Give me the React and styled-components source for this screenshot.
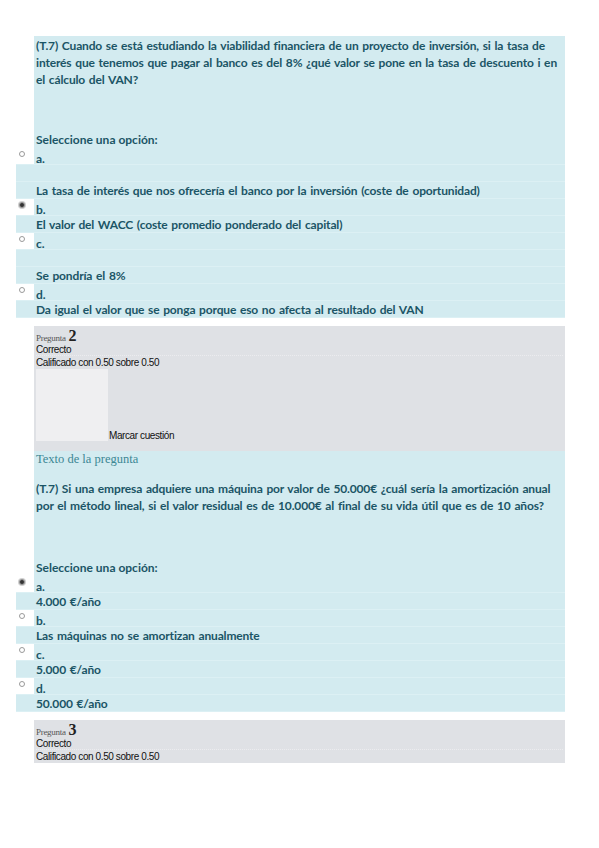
import React from "react";
import styled, { createGlobalStyle } from "styled-components";

const GlobalStyle = createGlobalStyle`
  * { box-sizing: border-box; }
  body { margin: 0; background: #ffffff; }
`;

const BLUE = "#d3ebf0";
const GRAY = "#dfe1e5";
const TEAL = "#1b5566";

const Page = styled.div`
  width: 599px;
  padding: 36px 34px 40px 16px;
  display: flex;
  flex-direction: column;
  gap: 8px;
  font-family: Lato, "Open Sans", sans-serif;
`;

const Block = styled.section`
  display: flex;
  flex-direction: column;
`;

const Info = styled.div`
  margin-left: 18px;
  background: ${GRAY};
  padding: 3px 2px ${(p) => (p.$flag ? "10px" : "0")};
  display: flex;
  flex-direction: column;
  font-family: "Liberation Sans", Arial, sans-serif;
  color: #111;
`;

const QNo = styled.div`
  height: 14px;
  line-height: 14px;
  font-family: "Liberation Serif", "Times New Roman", serif;
  font-size: 9px;
  color: #555;
  letter-spacing: -0.3px;
  b {
    font-size: 16px;
    color: #222;
    margin-left: 1px;
    letter-spacing: 0;
  }
`;

const InfoLine = styled.div`
  height: 13px;
  line-height: 13px;
  font-size: 10px;
  letter-spacing: -0.4px;
  border-bottom: ${(p) => (p.$dotted ? "1px dotted #ececef" : "none")};
`;

const FlagRow = styled.div`
  display: flex;
  align-items: flex-end;
`;

const FlagBox = styled.div`
  width: 72px;
  height: 72px;
  background: #efeff1;
`;

const FlagText = styled.span`
  font-size: 10px;
  line-height: 10px;
  letter-spacing: -0.4px;
  margin-left: 1px;
`;

const Formulation = styled.div`
  margin-left: 18px;
  background: ${BLUE};
  padding: ${(p) => (p.$top ? "1px" : "0")} 2px 0;
  color: ${TEAL};
  display: flex;
  flex-direction: column;
`;

const SmallTitle = styled.div`
  font-family: "Liberation Serif", "Times New Roman", serif;
  font-size: 12.5px;
  line-height: 17px;
  color: #3c8794;
  margin-bottom: 12px;
`;

const QText = styled.p`
  margin: 0 0 ${(p) => p.$gap || 43}px;
  font-size: 12px;
  line-height: 17px;
  font-weight: 700;
  letter-spacing: -0.15px;
  word-spacing: 1px;
`;

const Prompt = styled.div`
  font-size: 12px;
  line-height: 17px;
  font-weight: 700;
`;

const Options = styled.div`
  background: ${BLUE};
  display: flex;
  flex-direction: column;
  color: ${TEAL};
  font-size: 12px;
  font-weight: 700;
`;

const Row = styled.div`
  display: flex;
  height: 17px;
  line-height: 17px;
  border-bottom: 1px solid #dcf0f4;
  padding-left: ${(p) => (p.$indent ? "20px" : "0")};
  letter-spacing: -0.15px;
  word-spacing: 1px;
`;

const RadioBox = styled.div`
  width: 18px;
  height: 16px;
  background: #ffffff;
  display: flex;
  align-items: flex-start;
  padding: 3px 0 0 3px;
`;

const Radio = styled.span`
  width: 6px;
  height: 6px;
  border-radius: 50%;
  border: 1px solid #9a9a9a;
  background: ${(p) => (p.$on ? "#333" : "#fff")};
  box-shadow: ${(p) => (p.$on ? "0 0 0 1px #cfcfcf" : "none")};
`;

const Label = styled.span`
  padding-left: 2px;
  padding-top: 2px;
`;

function Option({ letter, checked, text, blank }) {
  return (
    <>
      <Row>
        <RadioBox>
          <Radio $on={checked} />
        </RadioBox>
        <Label>{letter}.</Label>
      </Row>
      {blank && <Row $indent />}
      <Row $indent>{text}</Row>
    </>
  );
}

function InfoBox({ n, flag }) {
  return (
    <Info $flag={flag}>
      <QNo>
        Pregunta <b>{n}</b>
      </QNo>
      <InfoLine $dotted>Correcto</InfoLine>
      <InfoLine>Calificado con 0.50 sobre 0.50</InfoLine>
      {flag && (
        <FlagRow>
          <FlagBox />
          <FlagText>Marcar cuestión</FlagText>
        </FlagRow>
      )}
    </Info>
  );
}

export default function App() {
  return (
    <>
      <GlobalStyle />
      <Page>
        <Block>
          <Formulation $top>
            <QText>
              (T.7) Cuando se está estudiando la viabilidad financiera de un proyecto de inversión, si la tasa de
              interés que tenemos que pagar al banco es del 8% ¿qué valor se pone en la tasa de descuento i en
              el cálculo del VAN?
            </QText>
            <Prompt>Seleccione una opción:</Prompt>
          </Formulation>
          <Options>
            <Option
              letter="a"
              blank
              text="La tasa de interés que nos ofrecería el banco por la inversión (coste de oportunidad)"
            />
            <Option letter="b" checked text="El valor del WACC (coste promedio ponderado del capital)" />
            <Option letter="c" blank text="Se pondría el 8%" />
            <Option
              letter="d"
              text="Da igual el valor que se ponga porque eso no afecta al resultado del VAN"
            />
          </Options>
        </Block>

        <Block>
          <InfoBox n="2" flag />
          <Formulation>
            <SmallTitle>Texto de la pregunta</SmallTitle>
            <QText $gap={45}>
              (T.7) Si una empresa adquiere una máquina por valor de 50.000€ ¿cuál sería la amortización anual
              por el método lineal, si el valor residual es de 10.000€ al final de su vida útil que es de 10 años?
            </QText>
            <Prompt>Seleccione una opción:</Prompt>
          </Formulation>
          <Options>
            <Option letter="a" checked text="4.000 €/año" />
            <Option letter="b" text="Las máquinas no se amortizan anualmente" />
            <Option letter="c" text="5.000 €/año" />
            <Option letter="d" text="50.000 €/año" />
          </Options>
        </Block>

        <Block>
          <InfoBox n="3" />
        </Block>
      </Page>
    </>
  );
}
